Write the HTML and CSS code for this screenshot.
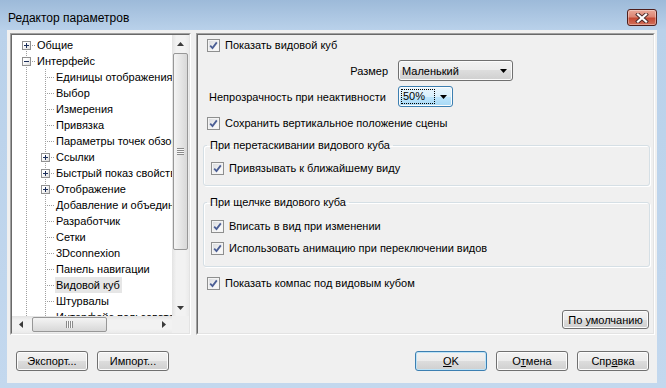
FILE: index.html
```html
<!DOCTYPE html>
<html lang="ru">
<head>
    <meta charset="UTF-8">
    <meta name="viewport" content="width=device-width, initial-scale=1.0">
    <title>Редактор параметров</title>
    <link rel="stylesheet" href="styles.css">
</head>
<body>
    <div class="window">
        <div class="titlebar">
            <span class="title">Редактор параметров</span>
            <button class="close-btn" aria-label="Закрыть">
                <svg width="14" height="10" viewBox="0 0 14 10">
                    <path d="M3 1.5L11 8.5M11 1.5L3 8.5" stroke="#4a2a2a" stroke-width="4" stroke-linecap="square"/>
                    <path d="M3 1.5L11 8.5M11 1.5L3 8.5" stroke="#fff" stroke-width="2.2" stroke-linecap="square"/>
                </svg>
            </button>
        </div>

        <div class="client">
            <div class="main">
                <!-- left: options tree -->
                <div class="tree sunken">
                    <div class="tree-body sunken-inner">
                        <div class="tree-view">
                            <div class="node"><span class="cell first"><span class="expander plus"></span></span><span class="label">Общие</span></div>
                            <div class="node"><span class="cell mid"><span class="expander"></span></span><span class="label">Интерфейс</span></div>
                            <div class="node"><span class="cell pass"></span><span class="cell mid"></span><span class="label">Единицы отображения</span></div>
                            <div class="node"><span class="cell pass"></span><span class="cell mid"></span><span class="label">Выбор</span></div>
                            <div class="node"><span class="cell pass"></span><span class="cell mid"></span><span class="label">Измерения</span></div>
                            <div class="node"><span class="cell pass"></span><span class="cell mid"></span><span class="label">Привязка</span></div>
                            <div class="node"><span class="cell pass"></span><span class="cell mid"></span><span class="label">Параметры точек обзора</span></div>
                            <div class="node"><span class="cell pass"></span><span class="cell mid"><span class="expander plus"></span></span><span class="label">Ссылки</span></div>
                            <div class="node"><span class="cell pass"></span><span class="cell mid"><span class="expander plus"></span></span><span class="label">Быстрый показ свойств</span></div>
                            <div class="node"><span class="cell pass"></span><span class="cell mid"><span class="expander plus"></span></span><span class="label">Отображение</span></div>
                            <div class="node"><span class="cell pass"></span><span class="cell mid"></span><span class="label">Добавление и объединение</span></div>
                            <div class="node"><span class="cell pass"></span><span class="cell mid"></span><span class="label">Разработчик</span></div>
                            <div class="node"><span class="cell pass"></span><span class="cell mid"></span><span class="label">Сетки</span></div>
                            <div class="node"><span class="cell pass"></span><span class="cell mid"></span><span class="label">3Dconnexion</span></div>
                            <div class="node"><span class="cell pass"></span><span class="cell mid"></span><span class="label">Панель навигации</span></div>
                            <div class="node"><span class="cell pass"></span><span class="cell mid"></span><span class="label selected">Видовой куб</span></div>
                            <div class="node"><span class="cell pass"></span><span class="cell mid"></span><span class="label">Штурвалы</span></div>
                            <div class="node"><span class="cell pass"></span><span class="cell mid"></span><span class="label">Интерфейс пользователя</span></div>
                        </div>

                        <div class="vscroll">
                            <span class="sb-btn">
                                <svg width="7" height="4" viewBox="0 0 7 4"><path d="M3.5 0L7 4H0z"/></svg>
                            </span>
                            <div class="sb-track">
                                <div class="thumb thumb-v"><span class="grip grip-v"></span></div>
                            </div>
                            <span class="sb-btn">
                                <svg width="7" height="4" viewBox="0 0 7 4"><path d="M0 0h7L3.5 4z"/></svg>
                            </span>
                        </div>
                        <div class="hscroll">
                            <span class="sb-btn">
                                <svg width="4" height="7" viewBox="0 0 4 7"><path d="M0 3.5L4 0v7z"/></svg>
                            </span>
                            <div class="sb-track">
                                <div class="thumb thumb-h"><span class="grip grip-h"></span></div>
                            </div>
                            <span class="sb-btn">
                                <svg width="4" height="7" viewBox="0 0 4 7"><path d="M0 0l4 3.5L0 7z"/></svg>
                            </span>
                        </div>
                        <div class="corner"></div>
                    </div>
                </div>

                <!-- right: view cube options -->
                <div class="options sunken">
                    <div class="options-body sunken-inner">
                        <label class="check-row">
                            <span class="checkbox"><svg width="11" height="11" viewBox="0 0 11 11"><path d="M2.2 5.6l2.3 2.4 4.3-5.6" fill="none" stroke="#4b5e95" stroke-width="1.8"/></svg></span>
                            Показать видовой куб
                        </label>

                        <div class="fields">
                            <span class="field-label right">Размер</span>
                            <div class="combo combo-size">
                                <span>Маленький</span>
                                <svg width="7" height="4" viewBox="0 0 7 4"><path d="M0 0h7L3.5 4z"/></svg>
                            </div>
                            <span class="field-label">Непрозрачность при неактивности</span>
                            <div class="combo combo-focus">
                                <span class="focus-rect">50%</span>
                                <svg width="7" height="4" viewBox="0 0 7 4"><path d="M0 0h7L3.5 4z"/></svg>
                            </div>
                        </div>

                        <label class="check-row gap-top">
                            <span class="checkbox"><svg width="11" height="11" viewBox="0 0 11 11"><path d="M2.2 5.6l2.3 2.4 4.3-5.6" fill="none" stroke="#4b5e95" stroke-width="1.8"/></svg></span>
                            Сохранить вертикальное положение сцены
                        </label>

                        <fieldset class="group">
                            <legend>При перетаскивании видового куба</legend>
                            <label class="check-row">
                                <span class="checkbox"><svg width="11" height="11" viewBox="0 0 11 11"><path d="M2.2 5.6l2.3 2.4 4.3-5.6" fill="none" stroke="#4b5e95" stroke-width="1.8"/></svg></span>
                                Привязывать к ближайшему виду
                            </label>
                        </fieldset>

                        <fieldset class="group group-click">
                            <legend>При щелчке видового куба</legend>
                            <label class="check-row">
                                <span class="checkbox"><svg width="11" height="11" viewBox="0 0 11 11"><path d="M2.2 5.6l2.3 2.4 4.3-5.6" fill="none" stroke="#4b5e95" stroke-width="1.8"/></svg></span>
                                Вписать в вид при изменении
                            </label>
                            <label class="check-row">
                                <span class="checkbox"><svg width="11" height="11" viewBox="0 0 11 11"><path d="M2.2 5.6l2.3 2.4 4.3-5.6" fill="none" stroke="#4b5e95" stroke-width="1.8"/></svg></span>
                                Использовать анимацию при переключении видов
                            </label>
                        </fieldset>

                        <label class="check-row gap-top">
                            <span class="checkbox"><svg width="11" height="11" viewBox="0 0 11 11"><path d="M2.2 5.6l2.3 2.4 4.3-5.6" fill="none" stroke="#4b5e95" stroke-width="1.8"/></svg></span>
                            Показать компас под видовым кубом
                        </label>

                        <button class="btn btn-default-values">По умолчанию</button>
                    </div>
                </div>
            </div>

            <div class="footer">
                <button class="btn">Экспорт...</button>
                <button class="btn">Импорт...</button>
                <button class="btn btn-primary spacer"><u>O</u>K</button>
                <button class="btn">О<u>т</u>мена</button>
                <button class="btn">Спр<u>а</u>вка</button>
            </div>
        </div>
    </div>
</body>
</html>
```

FILE: styles.css
```css
* {
    box-sizing: border-box;
}
html, body {
    margin: 0;
    padding: 0;
}
body {
    width: 666px;
    height: 388px;
    overflow: hidden;
    font-family: "Liberation Sans", Arial, sans-serif;
    font-size: 11px;
    color: #000;
    background: #c4d9ef;
    --vdots: repeating-linear-gradient(to bottom, #a0a0a0 0 1px, transparent 1px 2px);
    --hdots: repeating-linear-gradient(to right, #a0a0a0 0 1px, transparent 1px 2px);
}

/* window frame */
.window {
    width: 666px;
    height: 388px;
    display: flex;
    flex-direction: column;
    padding: 0 9px 5px 7px;
    background: linear-gradient(to bottom, #9dbad9 0, #b9d1ea 30px, #c3d8ee 100%);
}
.titlebar {
    height: 30px;
    flex: none;
    display: flex;
    justify-content: space-between;
    align-items: flex-start;
}
.title {
    margin: 10px 0 0 1px;
    font-size: 12px;
    line-height: 16px;
}
.close-btn {
    margin-top: 9px;
    width: 30px;
    height: 17px;
    padding: 0;
    display: flex;
    align-items: center;
    justify-content: center;
    border: 1px solid #4f1f1c;
    border-radius: 3px;
    background: linear-gradient(to bottom, #eaa898 0%, #dc8674 45%, #c54a34 55%, #d2705a 100%);
    box-shadow: inset 0 0 0 1px rgba(255, 255, 255, 0.35);
}

.client {
    flex: 1;
    display: flex;
    flex-direction: column;
    background: #f0f0f0;
}
.main {
    display: flex;
    gap: 5px;
    padding: 3px 2px 0 3px;
}

/* 3d sunken edge */
.sunken {
    height: 302px;
    border: 1px solid;
    border-color: #a0a0a0 #fff #fff #a0a0a0;
}
.sunken-inner {
    height: 100%;
    border: 1px solid;
    border-color: #696969 #e3e3e3 #e3e3e3 #696969;
}

/* tree */
.tree {
    width: 181px;
    flex: none;
}
.tree-body {
    display: grid;
    grid-template-columns: 1fr 17px;
    grid-template-rows: 1fr 17px;
    background: #fff;
}
.tree-view {
    overflow: hidden;
    padding: 2px 0 0 5px;
}
.node {
    display: flex;
    height: 16px;
    white-space: nowrap;
}
.cell {
    width: 19px;
    height: 16px;
    flex: none;
    display: flex;
    justify-content: center;
    align-items: flex-start;
    background-repeat: no-repeat;
}
.cell.pass {
    background-image: var(--vdots);
    background-size: 1px 16px;
    background-position: 9px 0;
}
.cell.mid {
    background-image: var(--vdots), var(--hdots);
    background-size: 1px 16px, 10px 1px;
    background-position: 9px 0, 9px 8px;
}
.cell.first {
    background-image: var(--vdots), var(--hdots);
    background-size: 1px 8px, 10px 1px;
    background-position: 9px 8px, 9px 8px;
}
.expander {
    width: 9px;
    height: 9px;
    margin-top: 4px;
    border: 1px solid #919191;
    background:
        linear-gradient(#1c2f5a, #1c2f5a) center / 5px 1px no-repeat,
        linear-gradient(to bottom right, #fff 30%, #dcdcdc);
}
.expander.plus {
    background:
        linear-gradient(#1c2f5a, #1c2f5a) center / 5px 1px no-repeat,
        linear-gradient(#1c2f5a, #1c2f5a) center / 1px 5px no-repeat,
        linear-gradient(to bottom right, #fff 30%, #dcdcdc);
}
.label {
    flex: none;
    line-height: 16px;
    padding: 0 2px 0 1px;
}
.label.selected {
    background: #e6e6e6;
}

/* scrollbars */
.vscroll,
.hscroll {
    display: flex;
    background: linear-gradient(to right, #e3e3e3, #f2f2f2 25%, #f2f2f2 75%, #ebebeb);
}
.vscroll {
    flex-direction: column;
}
.hscroll {
    background: linear-gradient(to bottom, #e3e3e3, #f2f2f2 25%, #f2f2f2 75%, #ebebeb);
}
.sb-btn {
    width: 17px;
    height: 17px;
    flex: none;
    display: flex;
    align-items: center;
    justify-content: center;
    fill: #3a3a3a;
}
.sb-track {
    flex: 1;
    display: flex;
}
.vscroll .sb-track {
    flex-direction: column;
}
.thumb {
    display: flex;
    align-items: center;
    justify-content: center;
    border: 1px solid #979797;
    border-radius: 2px;
}
.thumb-v {
    height: 197px;
    margin: 1px 1px 0 1px;
    background: linear-gradient(to right, #f4f4f4, #e6e6e6 50%, #d8d8d8);
}
.thumb-h {
    width: 75px;
    margin: 1px 0 1px 3px;
    background: linear-gradient(to bottom, #f4f4f4, #e6e6e6 50%, #d8d8d8);
}
.grip-v {
    width: 7px;
    height: 7px;
    background: repeating-linear-gradient(to bottom, #8a8a8a 0 1px, #f8f8f8 1px 2px);
}
.grip-h {
    width: 7px;
    height: 7px;
    background: repeating-linear-gradient(to right, #8a8a8a 0 1px, #f8f8f8 1px 2px);
}
.corner {
    background: #f0f0f0;
}

/* options panel */
.options {
    width: 459px;
    flex: none;
}
.options-body {
    display: flex;
    flex-direction: column;
    padding: 0 0 4px 5px;
}
.check-row {
    height: 20px;
    display: flex;
    align-items: center;
    gap: 5px;
    padding-left: 4px;
    white-space: nowrap;
}
.gap-top {
    margin-top: 6px;
}
.checkbox {
    width: 13px;
    height: 13px;
    flex: none;
    display: flex;
    align-items: center;
    justify-content: center;
    border: 1px solid #8e8f8f;
    background: linear-gradient(to bottom right, #d6d8dc, #f7f7f7 70%);
    box-shadow: inset 0 0 0 1px #f4f4f4;
}

.fields {
    display: grid;
    grid-template-columns: 179px auto;
    column-gap: 10px;
    row-gap: 5px;
    justify-content: start;
    align-items: center;
    margin-top: 5px;
    padding-left: 6px;
}
.field-label.right {
    justify-self: end;
}
.combo {
    height: 21px;
    display: flex;
    align-items: center;
    justify-content: space-between;
    padding: 0 5px 0 3px;
    border: 1px solid #707070;
    border-radius: 3px;
    background: linear-gradient(to bottom, #f2f2f2 0, #ebebeb 50%, #dddddd 50%, #cfcfcf 100%);
    box-shadow: inset 0 0 0 1px #fbfbfb;
}
.combo-size {
    width: 115px;
}
.combo-focus {
    width: 55px;
    padding-left: 2px;
    border-color: #3c7fb1;
    background: linear-gradient(to bottom, #eaf6fd 0, #d9f0fc 50%, #bee6fd 50%, #a7d9f5 100%);
}
.focus-rect {
    width: 34px;
    height: 15px;
    line-height: 13px;
    padding-left: 1px;
    border: 1px dotted #000;
}

.group {
    margin: 5px 3px 0 0;
    padding: 0 0 7px 3px;
    min-width: 0;
    border: 1px solid #d5dfe5;
    border-radius: 3px;
    box-shadow: inset 1px 1px #fff, 1px 1px #fff;
}
.group legend {
    padding: 0 3px;
    line-height: 14px;
}
.group .check-row {
    margin-top: 6px;
}
.group .check-row + .check-row {
    margin-top: 2px;
}
.group-click {
    margin-top: 9px;
    padding-bottom: 8px;
}
.group-click .check-row:first-of-type {
    margin-top: 7px;
}

/* buttons */
.btn {
    width: 72px;
    height: 20px;
    padding: 0;
    font: inherit;
    color: #000;
    border: 1px solid #707070;
    border-radius: 3px;
    background: linear-gradient(to bottom, #f2f2f2 0, #ebebeb 50%, #dddddd 50%, #cfcfcf 100%);
    box-shadow: inset 0 0 0 1px #fcfcfc;
}
.btn-primary {
    border-color: #3c7fb1;
    box-shadow: inset 0 0 0 1px #bde3f7;
}
.btn-default-values {
    width: 87px;
    height: 19px;
    margin: auto 4px 0 0;
    align-self: flex-end;
}
.footer {
    display: flex;
    gap: 9px;
    padding: 16px 8px 0 9px;
}
.spacer {
    margin-left: auto;
}
```
